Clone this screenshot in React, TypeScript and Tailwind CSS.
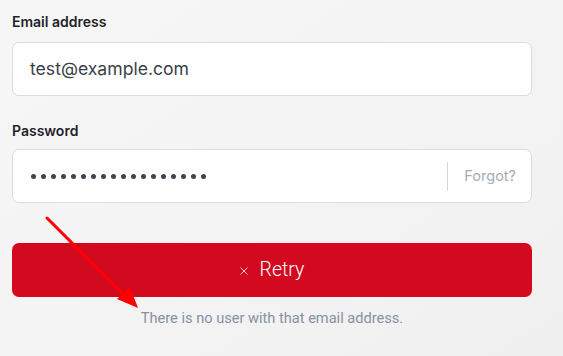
import React from "react";

export default function App() {
  const dots = Array.from({ length: 18 });
  return (
    <div className="relative w-[563px] h-[356px] overflow-hidden bg-gradient-to-br from-[#f7f7f7] to-[#f0f0f0]">
      <div className="flex flex-col w-[520px] ml-3 pt-[12px]">
        <label className="font-['Inter',sans-serif] text-[14px] leading-5 font-semibold text-[#1f2328]">
          Email address
        </label>
        <div className="mt-[10px] h-[54px] rounded-[7px] border border-[#dcdcdc] bg-white flex items-center pl-[17px]">
          <span className="font-['Inter',sans-serif] text-[17.6px] text-[#3a3f47]">test@example.com</span>
        </div>
        <label className="mt-[25px] font-['Inter',sans-serif] text-[14px] leading-5 font-semibold text-[#1f2328]">
          Password
        </label>
        <div className="mt-[8px] h-[54px] rounded-[7px] border border-[#dcdcdc] bg-white flex items-center pl-[18px]">
          <div className="flex flex-1 gap-[5px] items-center">
            {dots.map((_, i) => (
              <span key={i} className="block w-[5px] h-[5px] rounded-full bg-[#3d4450]" />
            ))}
          </div>
          <div className="w-px h-[29px] bg-[#d5d5d5]" />
          <span className="pl-[16px] pr-[15px] font-['Inter',sans-serif] text-[14.5px] text-[#a5abb5]">Forgot?</span>
        </div>
        <button className="mt-[40px] h-[54px] rounded-[7px] bg-[#d3091f] flex items-center justify-center gap-[12px] text-white">
          <svg width="8" height="8" viewBox="0 0 8 8" className="mt-[1px]">
            <path d="M0.5 0.5L7.5 7.5M7.5 0.5L0.5 7.5" stroke="#f6c9ce" strokeWidth="1" />
          </svg>
          <span className="font-['Roboto',sans-serif] text-[19.5px] font-light">Retry</span>
        </button>
        <p className="mt-[11px] text-center font-['Roboto',sans-serif] text-[14.6px] text-[#8791a1]">
          There is no user with that email address.
        </p>
      </div>
      <svg className="absolute left-0 top-0 pointer-events-none" width="563" height="356">
        <line x1="47" y1="218" x2="126" y2="297" stroke="#ff0000" strokeWidth="3" strokeLinecap="round" />
        <polygon points="138,308 117,299 130,287" fill="#ff0000" />
      </svg>
    </div>
  );
}
